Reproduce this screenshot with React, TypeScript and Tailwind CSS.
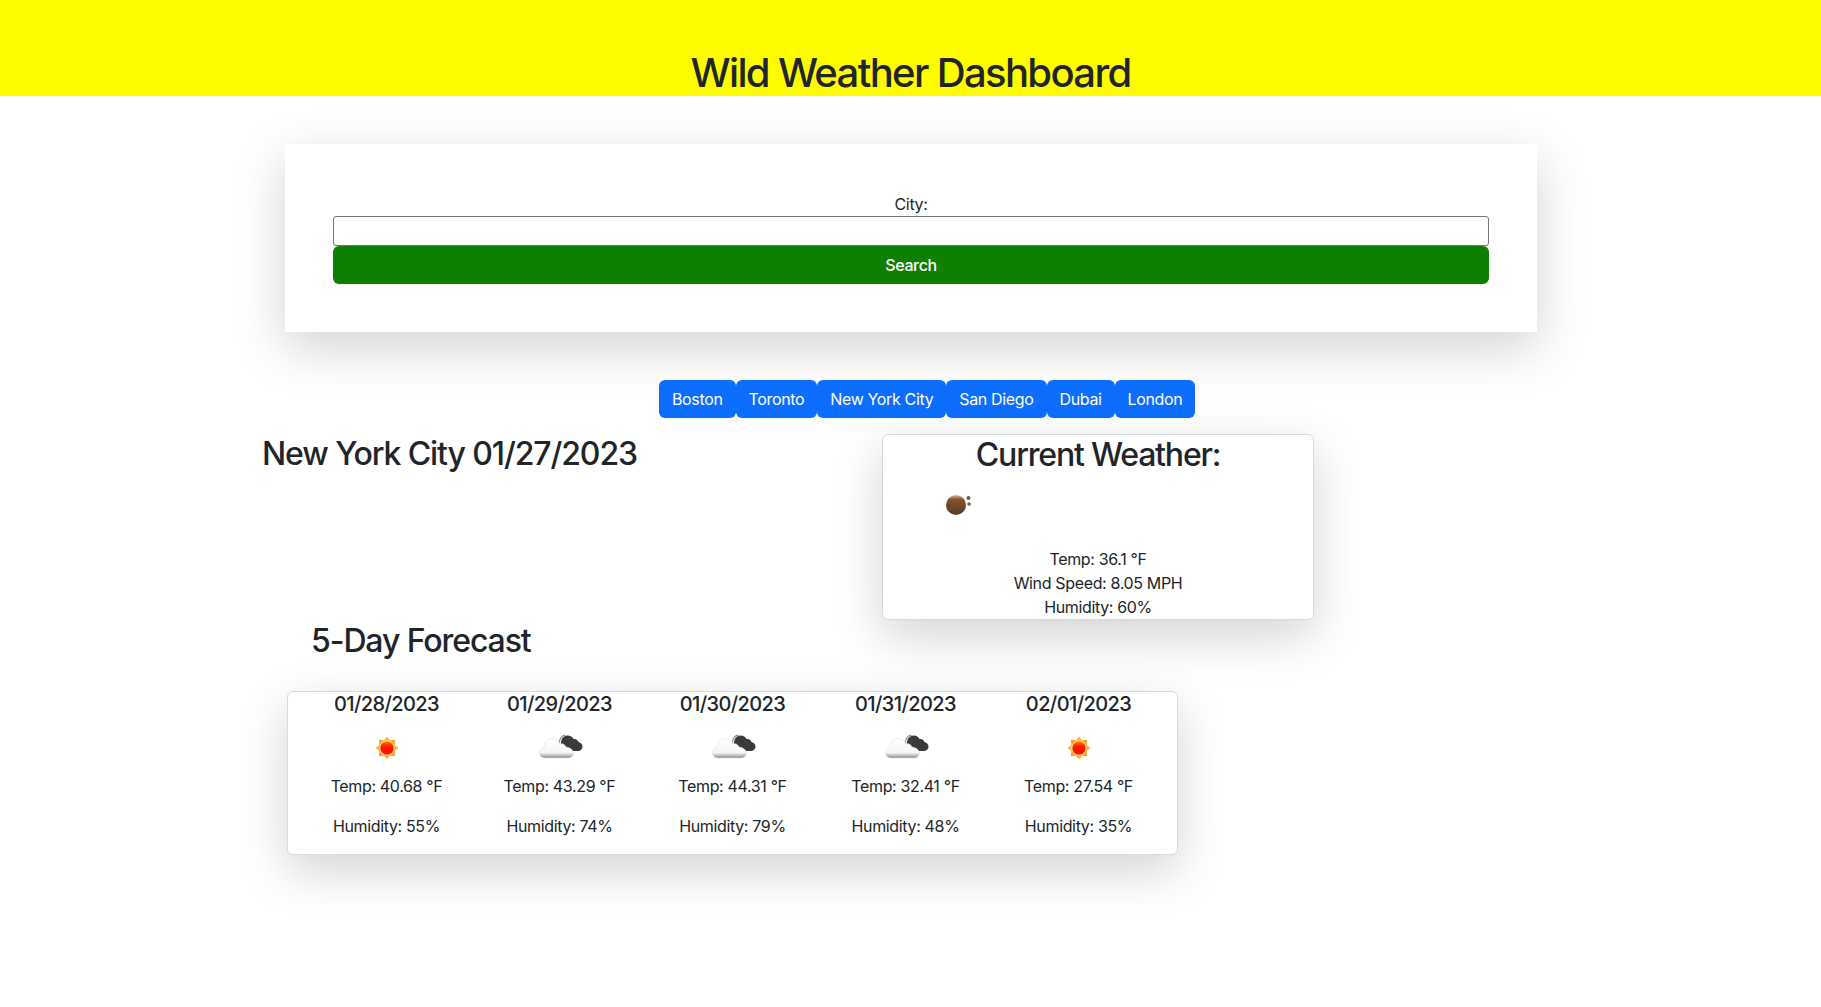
import React from 'react'

const cities = ['Boston', 'Toronto', 'New York City', 'San Diego', 'Dubai', 'London']

const forecast = [
  { date: '01/28/2023', icon: 'sun', temp: '40.68', humidity: '55' },
  { date: '01/29/2023', icon: 'cloud', temp: '43.29', humidity: '74' },
  { date: '01/30/2023', icon: 'cloud', temp: '44.31', humidity: '79' },
  { date: '01/31/2023', icon: 'cloud', temp: '32.41', humidity: '48' },
  { date: '02/01/2023', icon: 'sun', temp: '27.54', humidity: '35' }
]

function SunIcon({ id }: { id: string }) {
  const rays = [0, 45, 90, 135, 180, 225, 270, 315]
  return (
    <svg width="50" height="50" viewBox="0 0 50 50" className="block mx-auto">
      <defs>
        <linearGradient id={id} x1="0" y1="0" x2="0" y2="1">
          <stop offset="0" stopColor="#ff7a00" />
          <stop offset="0.4" stopColor="#ff1a00" />
          <stop offset="1" stopColor="#f01000" />
        </linearGradient>
      </defs>
      {rays.map(r => (
        <polygon
          key={r}
          points="21.4,18 25,13.5 28.6,18"
          transform={`rotate(${r} 25 25)`}
          fill={r % 90 === 0 ? '#ffb238' : '#ff9a1f'}
        />
      ))}
      <circle cx="25" cy="25" r="7.8" fill="#ffd27a" />
      <circle cx="25" cy="25" r="6.6" fill={`url(#${id})`} />
    </svg>
  )
}

function CloudIcon({ id }: { id: string }) {
  return (
    <svg width="50" height="50" viewBox="0 0 50 50" className="block mx-auto">
      <defs>
        <linearGradient id={id} x1="0" y1="0" x2="0" y2="1">
          <stop offset="0" stopColor="#ffffff" />
          <stop offset="0.72" stopColor="#f6f6f6" />
          <stop offset="0.85" stopColor="#c8c8c8" />
          <stop offset="1" stopColor="#8c8c8c" />
        </linearGradient>
      </defs>
      <path
        d="M26 22C25.5 16 28.5 12.5 32.5 12.5C35.5 12.5 37.5 14 38.5 16C41 15.5 43 17 43.5 19C46 19.5 47.5 21.5 47.5 23.5C47.5 26 45.5 28 42.5 28L34 28L30 24Z"
        fill="#3a3a3a"
      />
      <path d="M24.5 20.5C24 16 26.5 12.5 30.5 12.2" fill="none" stroke="#8f8f8f" strokeWidth="1.2" />
      <path
        d="M10 35C6 35 4.5 32 4.5 29.5C4.5 26.5 6.5 24.5 9 24.5C9.5 19 12 15.5 17 15.5C21 15.5 23.5 17.5 25 21C28 20 30 21.5 31 24C35 24.5 38.5 27 38.5 30C38.5 33 36 35 33 35Z"
        fill={`url(#${id})`}
        stroke="#dddddd"
        strokeWidth="0.5"
      />
    </svg>
  )
}

function MistIcon() {
  return (
    <svg width="50" height="50" viewBox="0 0 50 50" className="block">
      <defs>
        <linearGradient id="mist" x1="0" y1="0" x2="0" y2="1">
          <stop offset="0" stopColor="#d8bda6" />
          <stop offset="0.22" stopColor="#85532f" />
          <stop offset="1" stopColor="#5a3a22" />
        </linearGradient>
      </defs>
      <circle cx="21" cy="25" r="10" fill="url(#mist)" />
      <circle cx="33.5" cy="18" r="2" fill="#7d5a42" />
      <circle cx="34" cy="24" r="1.8" fill="#7d5a42" />
    </svg>
  )
}

export default function App() {
  return (
    <div className="min-h-[1007px] bg-white text-[#212529] font-['Inter',sans-serif] text-base leading-6 tracking-[-0.35px]">
      <header className="h-24 bg-[#fffc00] pt-[49px] text-center">
        <h1 className="text-[40px] leading-[47px] font-medium tracking-[-1.65px]">Wild Weather Dashboard</h1>
      </header>

      <section className="mt-12 ml-[285px] w-[1252px] h-[188px] p-12 bg-white shadow-[0_16px_48px_rgba(0,0,0,0.175)]">
        <label htmlFor="city" className="block text-center">City:</label>
        <input id="city" type="text" className="block w-full h-[30px] border border-[#767676] rounded-[3px] bg-white" />
        <button className="block w-full h-[38px] bg-[#0e7f00] text-white rounded-md font-medium">Search</button>
      </section>

      <nav className="mt-12 ml-[659px] flex">
        {cities.map(city => (
          <button key={city} className="h-[38px] px-[13px] bg-[#0d6efd] text-white rounded-md">
            {city}
          </button>
        ))}
      </nav>

      <div className="mt-4 flex pl-[262px]">
        <h2 className="w-[620px] pt-px text-[32px] leading-[38px] font-medium tracking-[-1.1px]">New York City 01/27/2023</h2>
        <div className="w-[432px] h-[186px] border border-[#d9dadb] rounded-md bg-white text-center shadow-[0_16px_48px_rgba(0,0,0,0.175)]">
          <h2 className="pt-px text-[32px] leading-[38px] font-medium tracking-[-1.2px]">Current Weather:</h2>
          <div className="h-[73px] pl-[52px] pt-[6px]">
            <MistIcon />
          </div>
          <p>Temp: 36.1 °F</p>
          <p>Wind Speed: 8.05 MPH</p>
          <p>Humidity: 60%</p>
        </div>
      </div>

      <h3 className="mt-[2px] pl-[311px] text-[32px] leading-[38px] font-medium tracking-[-1.1px]">5-Day Forecast</h3>

      <div className="mt-[31px] ml-[287px] w-[891px] h-[164px] flex px-[12px] border border-[#d9dadb] rounded-md bg-white text-center shadow-[0_16px_48px_rgba(0,0,0,0.175)]">
        {forecast.map((day, i) => (
          <div key={day.date} className="w-[173px]">
            <h5 className="text-[20px] leading-6 font-medium tracking-[-0.6px]">{day.date}</h5>
            <div className="mt-[7px] h-[51px]">
              {day.icon === 'sun' ? <SunIcon id={`sun-${i}`} /> : <CloudIcon id={`cloud-${i}`} />}
            </div>
            <p className="mb-4">Temp: {day.temp} °F</p>
            <p>Humidity: {day.humidity}%</p>
          </div>
        ))}
      </div>
    </div>
  )
}
